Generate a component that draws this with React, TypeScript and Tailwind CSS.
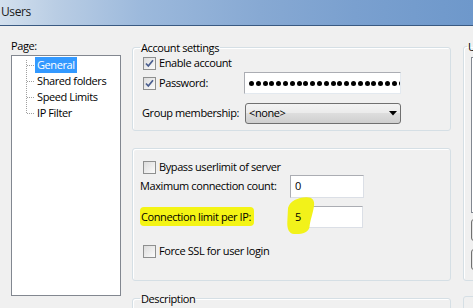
import React from "react";

function Check({ checked }: { checked?: boolean }) {
  return (
    <span className="flex h-[13px] w-[13px] shrink-0 items-center justify-center border border-[#8e8f8f] bg-[linear-gradient(135deg,#dcdcdc,#fbfbfb)]">
      {checked && (
        <svg width="11" height="11" viewBox="0 0 11 11">
          <path d="M2 5.5 L4.3 8 L9 2.2" fill="none" stroke="#4a5e8f" strokeWidth="1.7" />
        </svg>
      )}
    </span>
  );
}

function Tree() {
  const items = ["General", "Shared folders", "Speed Limits", "IP Filter"];
  return (
    <div className="mt-[2px] h-[241px] border border-[#828790] bg-white pl-[8px] pt-[1px]">
      <div className="flex">
        <svg width="15" height="64" className="shrink-0" shapeRendering="crispEdges">
          <path
            d="M6.5 3 V57 M7 8.5 H14 M7 24.5 H14 M7 40.5 H14 M7 56.5 H14"
            stroke="#a0a0a0"
            strokeDasharray="1 1"
            fill="none"
          />
        </svg>
        <div className="flex flex-col">
          {items.map((t, i) => (
            <span
              key={t}
              className={
                i === 0
                  ? "h-[16px] w-fit bg-[#3399ff] px-[2px] leading-[16px] text-white"
                  : "h-[16px] px-[2px] leading-[16px]"
              }
            >
              {t}
            </span>
          ))}
        </div>
      </div>
    </div>
  );
}

function TextBox({ value, w, h }: { value: string; w: string; h: string }) {
  return (
    <div className={`${w} ${h} flex items-center border border-[#abadb3] border-b-[#dbdfe6] border-r-[#dbdfe6] bg-white pl-[4px]`}>
      {value}
    </div>
  );
}

export default function App() {
  return (
    <div className="h-[308px] w-[473px] overflow-hidden whitespace-nowrap bg-[#f0f0f0] font-['Open_Sans',sans-serif] text-[11px] tracking-[-0.4px] text-black">
      <div className="h-[26px] border-b border-[#3a5a82] bg-[linear-gradient(90deg,#d3e0ee_0%,#b9cde4_12%,#9cb9dc_30%,#87a9d3_55%,#7aa0cf_75%,#6e98cb_100%)] pl-[1px] text-[12px] leading-[23px] text-[#1b1b1b]">
        Users
      </div>

      <div className="flex">
        <div className="ml-[11px] mt-[12px] w-[110px] shrink-0">
          <div className="h-[15px] leading-[15px]">Page:</div>
          <Tree />
        </div>

        <div className="ml-[11px] mt-[14px] w-[319px] shrink-0">
          <fieldset className="rounded-[3px] border border-[#d5dfe5] pb-[6px] pl-[10px] shadow-[inset_1px_1px_0_#fff]">
            <legend className="-ml-[3px] h-[15px] px-[1px] leading-[15px]">Account settings</legend>
            <div className="flex h-[16px] items-center gap-[3px]">
              <Check checked />
              <span>Enable account</span>
            </div>
            <div className="mt-[1px] flex h-[22px] items-center">
              <div className="flex w-[101px] items-center gap-[3px]">
                <Check checked />
                <span>Password:</span>
              </div>
              <div className="flex h-[22px] w-[157px] items-center gap-[1.8px] overflow-hidden border border-[#abadb3] border-b-[#e3e9ef] border-r-[#e3e9ef] bg-white pl-[4px]">
                {Array.from({ length: 24 }).map((_, i) => (
                  <span key={i} className="h-[5px] w-[5px] shrink-0 rounded-full bg-black" />
                ))}
              </div>
            </div>
            <div className="mt-[9px] flex h-[21px] items-center">
              <span className="-ml-[1px] w-[103px]">Group membership:</span>
              <div className="flex h-[21px] w-[156px] items-center justify-between rounded-[3px] border border-[#707070] bg-[linear-gradient(180deg,#f3f3f3_0%,#ebebeb_45%,#dddddd_50%,#cfcfcf_100%)] pl-[3px] pr-[3px]">
                <span>&lt;none&gt;</span>
                <svg width="8" height="5" viewBox="0 0 8 5">
                  <path d="M0 0 H8 L4 4.5 Z" fill="#000" />
                </svg>
              </div>
            </div>
          </fieldset>

          <div className="mt-[17px] rounded-[3px] border border-[#d5dfe5] pb-[21px] pl-[10px] pt-[11px] shadow-[inset_1px_1px_0_#fff]">
            <div className="flex h-[15px] items-center gap-[3px]">
              <Check />
              <span>Bypass userlimit of server</span>
            </div>
            <div className="flex h-[23px] items-center">
              <span className="-ml-[3px] w-[150px]">Maximum connection count:</span>
              <TextBox value="0" w="w-[74px]" h="h-[23px]" />
            </div>
            <div className="mt-[8px] flex h-[22px] items-center">
              <span className="-ml-[3px] w-[150px]">
                <span className="rounded-[4px] bg-[#f4f414] py-[2px] pl-[1px] pr-[3px]">Connection limit per IP:</span>
              </span>
              <div className="relative flex h-[22px] w-[73px] items-center border border-[#abadb3] border-b-[#dbdfe6] border-r-[#dbdfe6] bg-white pl-[4px]">
                <svg width="28" height="38" viewBox="0 0 28 38" className="absolute left-[-4px] top-[-10px]">
                  <path
                    d="M1 11 C3 4 11 0.5 19 0.3 C25 0 28 3 27 9 C26 16 23 24 22.5 30 C21.5 36 14 37.5 7 37 C2 36.5 0 32 0.3 25 Z"
                    fill="#f2f21a"
                  />
                </svg>
                <span className="relative">5</span>
              </div>
            </div>
            <div className="mt-[15px] flex h-[16px] items-center gap-[3px]">
              <Check />
              <span>Force SSL for user login</span>
            </div>
          </div>

          <fieldset className="mt-[10px] h-[40px] rounded-[3px] border border-[#d5dfe5] pl-[10px] shadow-[inset_1px_1px_0_#fff]">
            <legend className="-ml-[3px] h-[15px] px-[1px] leading-[15px]">Description</legend>
          </fieldset>
        </div>

        <div className="ml-[12px] mt-[13px] w-[80px] shrink-0">
          <fieldset className="h-[242px] rounded-[3px] border border-[#d5dfe5] pl-[7px] shadow-[inset_1px_1px_0_#fff]">
            <legend className="-ml-[4px] h-[15px] px-[1px] leading-[15px]">Users</legend>
            <div className="mt-[3px] h-[156px] border border-[#828790] bg-white" />
            <div className="mt-[6px] h-[22px] rounded-[3px] border border-[#707070] bg-[#e5e5e5]" />
            <div className="mt-[8px] h-[21px] rounded-[3px] border border-[#707070] bg-[#e5e5e5]" />
          </fieldset>
          <fieldset className="mt-[15px] h-[40px] rounded-[3px] border border-[#d5dfe5]" />
        </div>
      </div>
    </div>
  );
}
